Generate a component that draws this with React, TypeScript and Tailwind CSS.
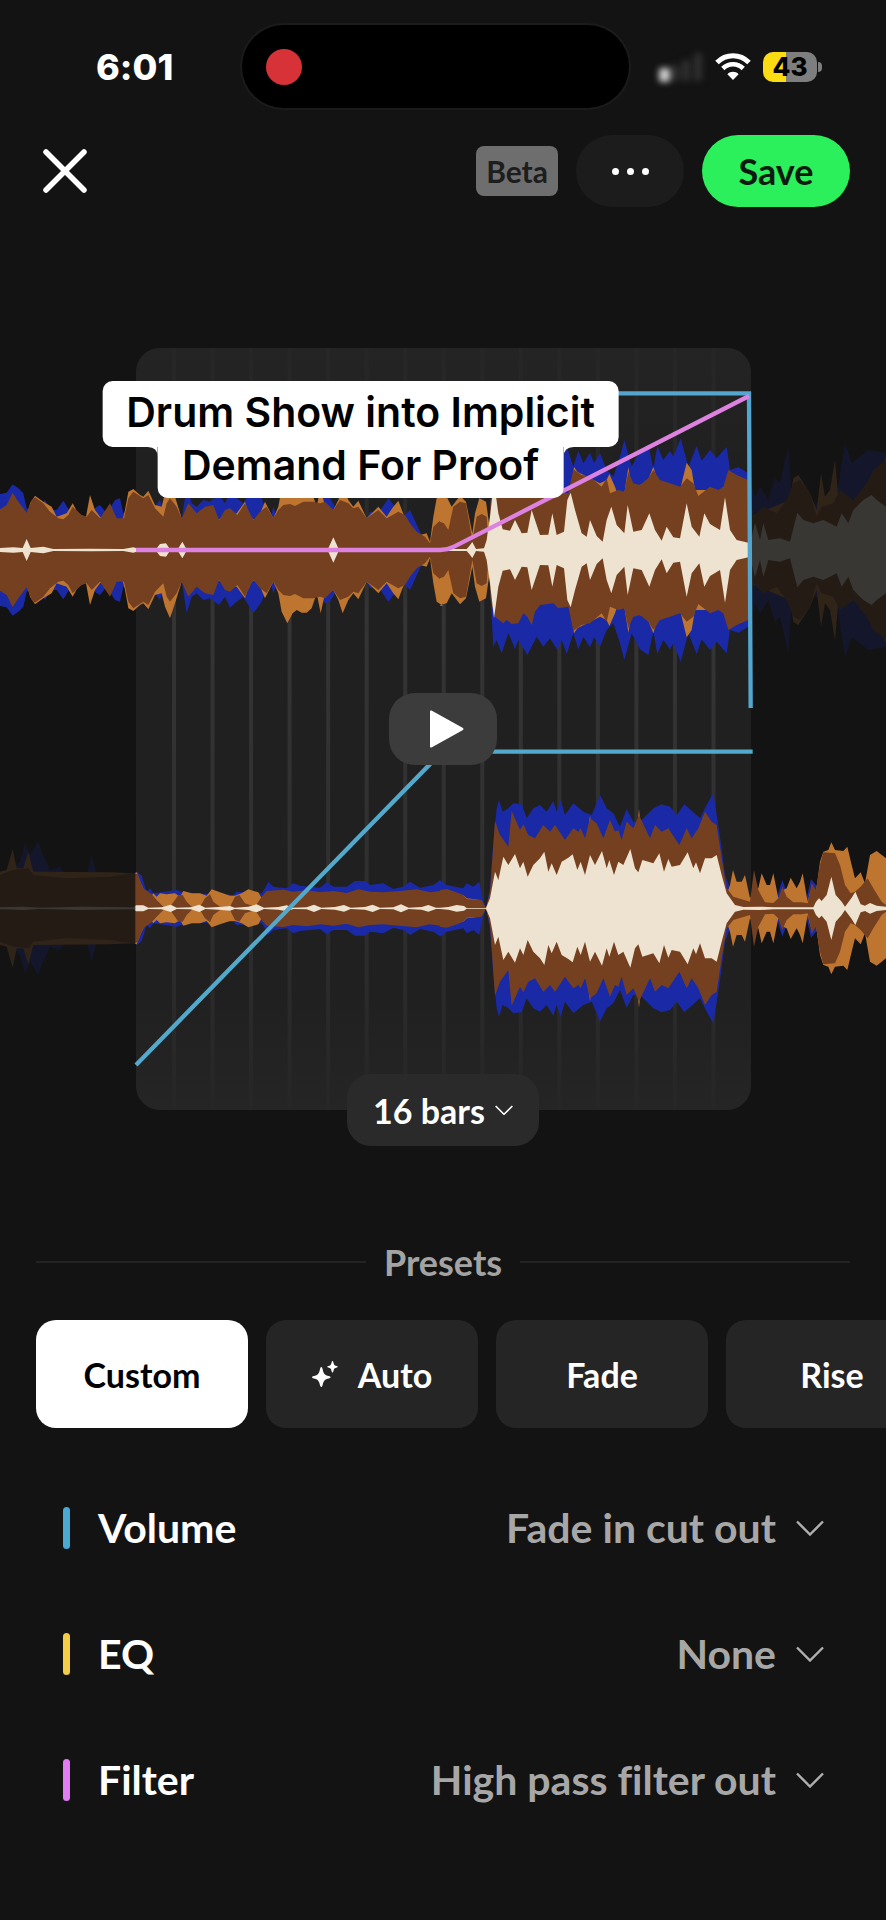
import { useState } from 'react'

// Every list is "x,half-height", mirrored around the centre line of its track
type Layer = { color: string; left: string; right: string }

const BLUE = '#1a2aa6'
const AMBER = '#be7530'
const BROWN = '#75401f'
const CREAM = '#eee3d0'

// x offset of the right part of each list
const SPLIT = 1320

const outgoing: Layer[] = [
  {
    color: BLUE,
    left: '0,168 20,172 38,197 55,185 70,170 80,125 110,110 135,150 150,120 170,120 190,148 210,115 230,110 260,100 290,130 300,135 320,110 345,150 360,155 370,110 400,100 465,130 480,150 490,120 545,90 560,190 575,140 590,130 610,150 630,145 657,165 675,140 690,173 710,155 730,140 760,190 785,155 810,90 820,130 835,90 940,100 975,160 990,155 1005,130 1040,100 1100,95 1110,115 1135,110 1165,155 1185,130 1215,105 1230,120 1260,55 1270,40 1290,20 1318,10',
    right: '0,10 120,10 145,0 155,200 160,290 170,270 185,310 205,250 215,272 225,298 235,270 262,315 290,260 310,290 330,265 352,300 365,270 380,312 400,250 415,298 430,260 450,292 462,262 480,290 500,240 520,220 540,280 553,330 575,250 600,298 625,315 640,245 652,312 670,270 690,298 700,280 722,335 745,250 770,312 785,268 810,300 830,275 860,310 870,240 895,248 925,230 945,160 960,190 985,150 1005,215 1020,200 1045,310 1055,150 1100,130 1190,160 1215,320 1235,260 1260,280 1285,300 1338,290',
  },
  {
    color: AMBER,
    left: '0,80 80,80 90,140 105,163 130,145 155,130 170,100 200,110 218,140 240,100 258,100 270,165 285,120 300,100 360,60 375,120 385,175 400,183 420,165 430,160 445,178 465,135 485,130 495,170 510,205 525,160 545,95 560,60 710,110 735,145 750,100 770,85 795,145 820,95 835,130 845,185 862,220 878,190 890,180 905,188 920,188 935,175 950,130 962,190 975,130 1000,120 1015,150 1028,190 1045,150 1060,130 1075,148 1100,95 1120,115 1135,130 1160,100 1180,130 1195,148 1215,95 1235,50 1260,45 1280,50 1290,25 1300,100 1310,155 1330,168 1320,167',
    right: '0,165 20,160 35,130 60,163 78,145 97,50 105,110 118,155 138,145 150,60 165,140 390,160 402,250 412,235 480,200 500,210 508,228 525,190 535,160 553,170 565,248 575,190 620,200 640,250 655,200 720,180 740,262 755,240 765,180 860,180 930,100 1050,150 1060,215 1075,225 1110,170 1130,120 1143,230 1155,160 1170,180 1185,270 1200,100 1310,200 1338,280',
  },
  {
    color: BROWN,
    left: '0,122 20,135 38,172 55,145 80,112 95,150 105,158 130,140 150,115 175,95 190,92 205,105 218,130 245,105 260,100 275,120 300,95 330,140 350,95 372,95 385,155 400,175 430,155 445,165 465,125 490,100 500,140 510,155 530,130 545,95 565,140 590,110 615,130 640,135 657,90 675,120 690,125 712,105 735,140 760,90 780,115 800,130 820,95 835,120 850,135 870,138 885,132 910,145 940,145 960,140 975,145 1000,120 1020,150 1045,140 1060,125 1075,130 1100,95 1135,120 1160,95 1195,115 1215,105 1230,80 1250,55 1275,40 1290,20 1300,70 1320,88',
    right: '0,85 12,80 25,60 40,130 60,145 78,140 97,30 110,100 125,108 140,100 145,20 152,150 165,200 190,220 200,210 215,222 235,220 250,190 262,200 275,225 285,185 300,165 340,160 355,175 385,170 400,242 425,225 450,220 485,190 500,215 510,170 535,180 553,175 565,235 580,200 600,195 625,215 640,240 660,210 690,200 720,190 740,215 760,200 775,162 810,190 835,180 850,190 865,240 890,225 925,210 940,100 970,130 1010,110 1040,150 1060,200 1080,210 1110,170 1130,100 1145,130 1180,140 1200,180 1240,150 1280,200 1300,240 1338,270',
  },
  {
    color: CREAM,
    left: '0,6 40,8 68,6 80,33 92,6 130,10 160,3 270,4 370,3 400,8 420,2 470,5 480,18 498,20 508,5 535,5 547,25 558,5 900,5 985,5 1000,38 1015,5 1100,3 1320,3',
    right: '0,3 80,3 88,12 97,24 108,3 132,5 140,30 150,100 162,205 175,110 188,62 210,58 225,90 245,50 262,52 275,120 300,45 325,46 337,110 350,45 372,55 382,150 392,172 405,120 425,50 440,40 450,90 470,42 488,25 500,90 514,130 530,75 553,50 563,135 580,55 605,60 628,110 645,60 665,28 680,70 700,38 720,35 740,140 755,70 778,40 793,110 810,78 840,60 855,158 870,60 890,30 925,22 935,40 945,82 960,30 970,80 985,30 1020,35 1050,25 1072,112 1090,90 1120,80 1150,90 1170,80 1190,70 1205,110 1225,80 1240,120 1260,140 1270,150 1295,165 1310,150 1338,130',
  },
]

const incoming: Layer[] = [
  {
    color: BLUE,
    left: '0,80 60,140 75,195 90,160 115,200 125,170 150,115 180,125 200,95 260,100 275,160 290,100 400,100 412,110 425,98 440,50 450,60 460,45 530,55 545,50 580,45 700,40 710,50 785,45 795,60 805,80 820,65 860,60 880,75 900,68 930,65 960,62 980,78 1000,65 1040,65 1065,82 1095,82 1110,70 1150,75 1180,58 1210,65 1230,80 1260,62 1300,70 1320,84',
    right: '0,85 20,70 45,65 70,60 80,75 100,65 118,80 128,30 138,0 150,60 160,200 170,300 177,325 188,290 205,300 220,315 245,312 260,270 280,300 300,310 320,290 340,322 350,290 362,325 375,280 400,315 430,290 455,280 468,310 480,340 500,300 520,285 540,245 560,298 580,260 600,260 640,300 665,312 690,305 710,280 733,312 760,288 780,270 800,310 820,345 830,280 845,180 855,100 870,60 900,30 1010,30 1027,85 1040,50 1100,30 1113,88 1128,70 1150,60 1338,60',
  },
  {
    color: AMBER,
    left: '0,110 20,115 38,178 50,120 70,120 85,168 100,110 330,108 400,105 410,108 425,70 440,40 450,32 460,45 470,35 480,45 500,42 525,45 540,35 550,52 575,45 600,45 620,38 635,57 660,48 690,38 705,38 725,45 745,57 775,48 785,30 800,45 1320,45',
    right: '0,45 70,40 80,30 120,25 138,0 150,40 170,150 435,160 450,278 462,180 585,180 597,298 609,180 800,170 835,120 850,60 860,40 870,70 879,115 890,80 905,80 915,100 930,30 945,60 955,60 965,105 980,70 990,70 1000,105 1015,30 1030,55 1040,60 1052,92 1070,60 1080,80 1088,105 1103,20 1112,55 1128,50 1140,140 1150,170 1165,175 1174,198 1185,175 1210,172 1222,185 1235,130 1245,90 1262,108 1275,75 1290,160 1310,172 1338,150',
  },
  {
    color: BROWN,
    left: '0,100 40,115 85,120 100,100 200,90 330,95 400,105 413,102 430,60 455,42 470,25 490,5 510,5 525,25 535,40 548,40 560,20 575,5 600,5 615,30 630,42 640,20 660,5 690,5 705,35 718,40 735,15 765,5 785,35 800,52 850,56 880,50 920,54 960,48 1000,52 1040,46 1075,57 1110,50 1150,48 1200,52 1250,57 1290,48 1320,52',
    right: '0,55 20,58 45,50 70,40 80,28 125,25 138,0 150,50 165,262 180,220 205,185 215,292 240,235 250,252 265,220 285,210 310,250 330,230 345,250 375,205 400,240 415,230 422,240 435,210 450,270 470,255 490,210 510,265 525,230 535,235 545,205 560,260 580,240 597,280 630,210 645,250 665,230 685,240 718,190 740,240 755,210 775,240 795,290 815,260 830,250 845,150 860,60 880,35 930,20 942,115 955,55 975,18 1000,16 1015,30 1027,65 1040,35 1060,18 1085,18 1103,15 1115,75 1128,55 1140,130 1150,168 1185,165 1200,130 1215,70 1232,45 1245,50 1262,65 1283,90 1300,60 1325,20 1338,10',
  },
  {
    color: CREAM,
    left: '0,3 70,5 120,2 240,5 400,3 408,9 430,9 445,2 485,3 512,11 530,2 572,3 598,11 616,2 655,4 690,7 704,2 745,5 770,12 792,2 835,4 860,9 880,2 920,3 942,11 964,2 1005,4 1032,10 1052,2 1095,4 1118,11 1140,2 1180,3 1203,12 1226,2 1265,4 1285,10 1308,2 1320,2',
    right: '0,2 25,4 50,10 72,7 80,1 138,1 150,30 165,110 175,85 190,155 205,130 225,163 240,120 250,140 263,95 280,130 300,150 313,170 325,110 335,135 350,100 365,140 385,152 398,162 412,115 422,140 435,100 450,160 465,130 486,172 500,120 508,145 522,100 535,140 550,130 571,178 585,120 595,108 607,145 640,135 658,165 672,110 685,148 695,125 720,130 743,168 760,120 768,138 780,105 795,150 815,150 830,160 845,100 860,45 885,10 910,4 960,5 1000,3 1120,3 1128,20 1137,30 1145,22 1160,40 1174,95 1187,40 1205,20 1215,5 1235,32 1246,50 1262,12 1275,8 1290,16 1310,8 1338,5',
  },
]

const parse = (list: string, offset: number) =>
  list.split(' ').map((pair) => {
    const [x, h] = pair.split(',').map(Number)
    return [x + offset, h]
  })

const mirrored = (layer: Layer, cy: number) => {
  const points = [...parse(layer.left, 0), ...parse(layer.right, SPLIT)]
  const top = points.map(([x, h]) => `${x} ${cy - h}`)
  const bottom = points.map(([x, h]) => `${x} ${cy + h}`).reverse()
  return `M${top.join('L')}L${bottom.join('L')}Z`
}

function Waveform({ layers, cy }: { layers: Layer[]; cy: number }) {
  return (
    <>
      {layers.map((layer) => (
        <path key={layer.color} d={mirrored(layer, cy)} fill={layer.color} />
      ))}
    </>
  )
}

function TransitionChart() {
  const gridLines = Array.from({ length: 15 }, (_, i) => 522 + i * 115.6)

  return (
    <svg viewBox="0 0 2658 2286" className="block w-full" aria-hidden="true">
      <defs>
        <linearGradient id="grid" x1="0" y1="0" x2="0" y2="1">
          <stop offset="0" stopColor="#262626" />
          <stop offset="0.2" stopColor="#2a2a2a" />
          <stop offset="0.35" stopColor="#343434" />
          <stop offset="0.65" stopColor="#303030" />
          <stop offset="1" stopColor="#262626" />
        </linearGradient>
        <linearGradient id="panel" x1="0" y1="0" x2="0" y2="1">
          <stop offset="0" stopColor="#242424" />
          <stop offset="0.15" stopColor="#202020" />
          <stop offset="0.85" stopColor="#202020" />
          <stop offset="1" stopColor="#252525" />
        </linearGradient>
      </defs>
      <rect x="408" width="1845" height="2286" rx="72" fill="url(#panel)" />
      {gridLines.map((x) => (
        <rect key={x} x={x - 6} width="12" height="2286" fill="url(#grid)" />
      ))}

      <Waveform layers={outgoing} cy={606} />
      <rect x="2253" y="200" width="405" height="820" fill="#131313" opacity="0.83" />
      <Waveform layers={incoming} cy={1681} />
      <rect x="0" y="1400" width="406" height="560" fill="#131313" opacity="0.83" />

      <g fill="none" strokeWidth="13">
        <path d="M408 136H2247L2252 1080" stroke="#52a6cf" />
        <path d="M408 606H1320Q1342 606 1362 596L2247 144" stroke="#dd82e0" />
        <path d="M408 2151L1308 1230Q1325 1211 1350 1211H2258" stroke="#52a9cc" />
      </g>
    </svg>
  )
}

function Chevron({ className }: { className: string }) {
  return (
    <svg viewBox="0 0 28 16" fill="none" stroke="currentColor" className={className} aria-hidden="true">
      <path d="M1 1.5 14 14.5 27 1.5" strokeWidth="2.4" />
    </svg>
  )
}

function StatusBar() {
  return (
    <div className="flex items-center pt-[25px]">
      <time className="flex-1 pl-24 font-['Inter',sans-serif] text-4xl font-extrabold">6:01</time>
      <div className="flex h-[83px] w-[387px] items-center rounded-full bg-black pl-6 ring-2 ring-[#1b1b1b]">
        <span className="size-9 rounded-full bg-[#d63237]" />
      </div>
      <div className="flex w-[257px] items-center justify-end gap-3 pr-16">
        <svg viewBox="0 0 44 30" className="w-11 blur-[3px]" aria-hidden="true">
          <rect x="0" y="16" width="11" height="14" rx="3" fill="#cfcfcf" />
          <rect x="12" y="13" width="8" height="16" rx="2" fill="#303030" />
          <rect x="23" y="8" width="8" height="21" rx="2" fill="#303030" />
          <rect x="35" y="1" width="8" height="28" rx="2" fill="#303030" />
        </svg>
        <svg viewBox="0 0 36 27" fill="none" stroke="#fff" className="w-9" aria-hidden="true">
          <path d="M2 9.5C11 0.5 25 0.5 34 9.5" strokeWidth="5" />
          <path d="M7.8 15.5C13.5 9.8 22.5 9.8 28.2 15.5" strokeWidth="4.6" />
          <path d="M18 27 12.4 21.2C15.5 18 20.5 18 23.6 21.2Z" fill="#fff" stroke="none" />
        </svg>
        <div className="flex items-center gap-px">
          <span className="flex h-[30px] w-[54px] items-center justify-center rounded-[10px] bg-[linear-gradient(90deg,#fbdb12_43%,#7e7e7e_43%)] font-['Inter',sans-serif] text-[26px] font-extrabold text-black">
            43
          </span>
          <span className="h-2.5 w-1 rounded-r-full bg-[#7e7e7e]" />
        </div>
      </div>
    </div>
  )
}

function Header() {
  return (
    <header className="flex items-center gap-[18px] pt-[27px] pr-9 pl-[42px]">
      <button type="button" aria-label="Close" className="mr-auto">
        <svg viewBox="0 0 46 46" stroke="#fff" strokeWidth="5.5" strokeLinecap="round" className="size-[46px]">
          <path d="M4 4 42 42M42 4 4 42" />
        </svg>
      </button>
      <span className="rounded-lg bg-[#6e6e6e] px-2.5 py-[7px] text-[30px] leading-9 font-bold text-[#1d1d1d]">Beta</span>
      <button type="button" aria-label="More" className="flex h-[72px] w-[108px] items-center justify-center gap-2 rounded-full bg-[#1c1c1c]">
        <span className="size-[7px] rounded-full bg-white" />
        <span className="size-[7px] rounded-full bg-white" />
        <span className="size-[7px] rounded-full bg-white" />
      </button>
      <button type="button" className="h-[72px] w-[148px] rounded-full bg-[#2cf05b] text-[36px] font-bold text-[#0c1a10]">
        Save
      </button>
    </header>
  )
}

function Caption() {
  return (
    <div className="absolute top-[33px] left-[40.7%] flex -translate-x-1/2 flex-col items-center font-['Inter',sans-serif] text-[41px] font-semibold whitespace-nowrap text-black">
      <p className="rounded-[10px] bg-white px-6 pb-1 text-center leading-[62px]">Drum Show into Implicit</p>
      <div className="flex items-start">
        <svg viewBox="0 0 10 10" fill="#fff" className="size-2.5" aria-hidden="true">
          <path d="M0 0H10V10Q10 0 0 0Z" />
        </svg>
        <p className="h-[51px] rounded-b-[10px] bg-white px-6 text-center leading-9">Demand For Proof</p>
        <svg viewBox="0 0 10 10" fill="#fff" className="size-2.5" aria-hidden="true">
          <path d="M10 0H0V10Q0 0 10 0Z" />
        </svg>
      </div>
    </div>
  )
}

function Sparkles() {
  return (
    <svg viewBox="0 0 26 26" fill="#fff" className="size-[26px]" aria-hidden="true">
      <path d="M9.3 6Q10.2 6 10.6 8C11.4 12.6 12.8 14.2 16.8 15Q18.6 15.4 18.6 16.2 18.6 17 16.8 17.4C12.8 18.2 11.4 19.8 10.6 24.2Q10.2 26 9.3 26 8.4 26 8 24.2C7.2 19.8 5.8 18.2 1.8 17.4Q0 17 0 16.2 0 15.4 1.8 15C5.8 14.2 7.2 12.6 8 8Q8.4 6 9.3 6Z" />
      <path d="M20.5 0Q21.1 0 21.4 1.4C21.9 3.8 22.6 4.5 24.8 5 26 5.3 26 6.3 24.8 6.6 22.6 7.1 21.9 7.8 21.4 10.2Q21.1 11.6 20.5 11.6 19.9 11.6 19.6 10.2C19.1 7.8 18.4 7.1 16.2 6.6 15 6.3 15 5.3 16.2 5 18.4 4.5 19.1 3.8 19.6 1.4Q19.9 0 20.5 0Z" />
    </svg>
  )
}

const presets = ['Custom', 'Auto', 'Fade', 'Rise']

const controls = [
  { id: 'volume', label: 'Volume', value: 'Fade in cut out', bar: 'bg-[#4aa8d2]' },
  { id: 'eq', label: 'EQ', value: 'None', bar: 'bg-[#f3cd45]' },
  { id: 'filter', label: 'Filter', value: 'High pass filter out', bar: 'bg-[#e07df2]' },
]

export default function App() {
  const [preset, setPreset] = useState('Custom')

  return (
    <main className="min-h-screen overflow-x-hidden bg-[#131313] pb-16 font-['Lato',sans-serif] text-white [font-variant-ligatures:none]">
      <StatusBar />
      <Header />

      <section className="relative mt-[141px]">
        <TransitionChart />
        <div className="absolute inset-0 flex items-center justify-center">
          <button type="button" aria-label="Play" className="flex h-[72px] w-[108px] items-center justify-center rounded-[26px] bg-[#3c3c3c] pl-2">
            <svg viewBox="0 0 34 38" fill="#fff" className="h-[38px] w-[34px]">
              <path d="M0 1.5Q0 0 1.5 .6L33 18Q34 19 33 20L1.5 37.4Q0 38 0 36.5Z" />
            </svg>
          </button>
        </div>
        <Caption />
        <div className="absolute inset-x-0 bottom-0 flex translate-y-1/2 justify-center">
          <div className="flex h-[72px] items-center gap-2.5 rounded-3xl bg-[#2a2a2a] px-[26px]">
            <select aria-label="Length" className="appearance-none [field-sizing:content] text-[34px] font-bold">
              <option>16 bars</option>
            </select>
            <Chevron className="w-[18px]" />
          </div>
        </div>
      </section>

      <section className="mt-[132px]">
        <div className="flex items-center gap-[18px] px-9">
          <span className="h-0.5 flex-1 bg-[#232323]" />
          <h2 className="text-[36px] leading-10 font-bold text-[#a3a3a3]">Presets</h2>
          <span className="h-0.5 flex-1 bg-[#232323]" />
        </div>
        <div className="mt-[38px] flex gap-[18px] overflow-hidden pl-9">
          {presets.map((name) => (
            <button
              key={name}
              type="button"
              onClick={() => setPreset(name)}
              className={`flex h-[108px] w-[212px] shrink-0 items-center justify-center gap-5 rounded-[20px] text-[34px] font-bold ${
                preset === name ? 'bg-white text-black' : 'bg-[#252525] text-white'
              }`}
            >
              {name === 'Auto' && <Sparkles />}
              {name}
            </button>
          ))}
        </div>
      </section>

      <section className="mt-[37px] pr-[62px] pl-[63px]">
        {controls.map((control) => (
          <div key={control.id} className="flex h-[126px] items-center">
            <span className={`mr-7 h-[42px] w-[7px] rounded-full ${control.bar}`} />
            <label htmlFor={control.id} className="text-[41px] font-bold">
              {control.label}
            </label>
            <select
              id={control.id}
              className="mr-5 ml-auto appearance-none text-right text-[41px] font-bold text-[#a7a7a7] [field-sizing:content]"
            >
              <option>{control.value}</option>
            </select>
            <Chevron className="w-7 text-[#b0b0b0]" />
          </div>
        ))}
      </section>
    </main>
  )
}
